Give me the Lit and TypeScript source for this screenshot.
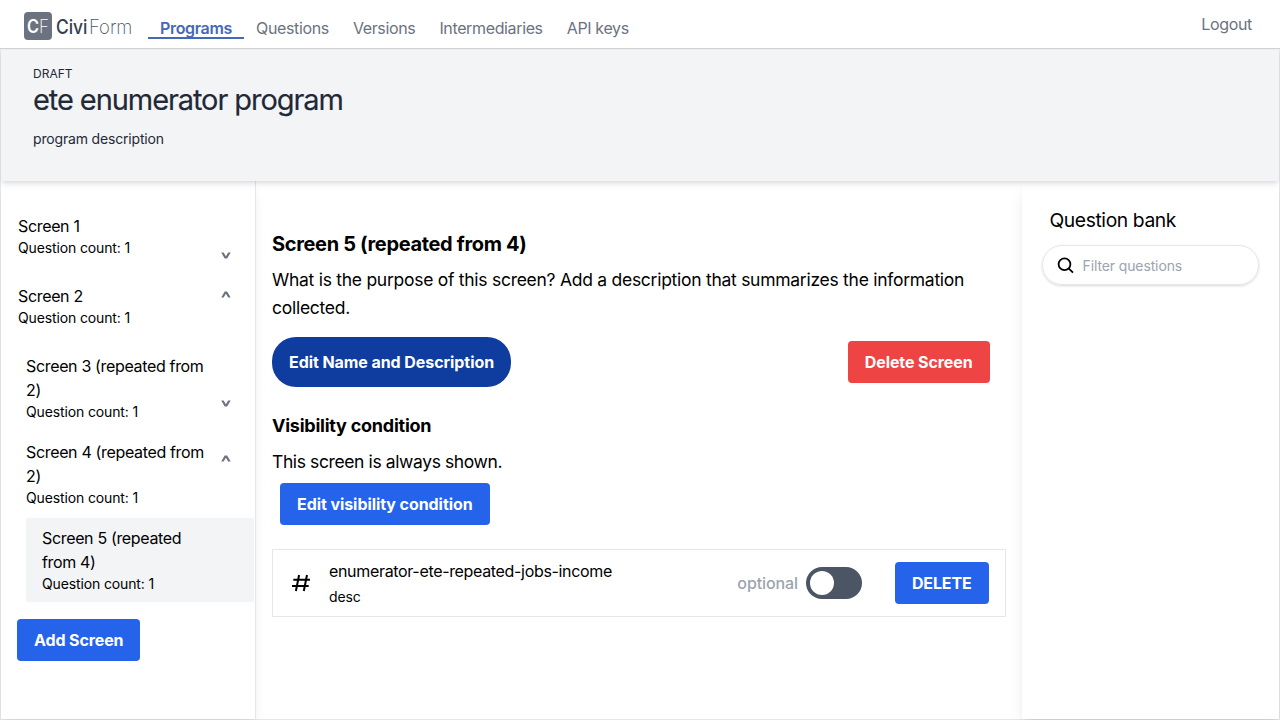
import { LitElement, html, css, nothing } from "lit";
import { customElement } from "lit/decorators.js";
import { classMap } from "lit/directives/class-map.js";

interface ScreenItem {
  name: string;
  level: number;
  arrow?: "up" | "down";
  selected?: boolean;
}

const SCREENS: ScreenItem[] = [
  { name: "Screen 1", level: 0, arrow: "down" },
  { name: "Screen 2", level: 0, arrow: "up" },
  { name: "Screen 3 (repeated from 2)", level: 1, arrow: "down" },
  { name: "Screen 4 (repeated from 2)", level: 1, arrow: "up" },
  { name: "Screen 5 (repeated from 4)", level: 2, selected: true },
];

const LINKS = ["Programs", "Questions", "Versions", "Intermediaries", "API keys"];

@customElement("app-root")
export class AppRoot extends LitElement {
  static styles = css`
    :host { display: block; width: 1280px; height: 720px; overflow: hidden; background: #fff; color: #000;
      font-family: Inter, "Liberation Sans", sans-serif; font-size: 16px; line-height: 24px; letter-spacing: -0.34px; }
    * { box-sizing: border-box; }
    .page { display: flex; flex-direction: column; height: 720px; }
    .top { height: 49px; flex: none; display: flex; align-items: flex-start; padding: 12px 28px 0 24px; color: #6b7280;
      border-bottom: 1px solid #cfd2d6; }
    .logo { display: block; flex: none; width: 110px; height: 28px; margin-right: 14px; letter-spacing: 0; }
    .nav { display: flex; padding-top: 4px; }
    .link { padding: 0 12px; height: 23px; white-space: nowrap; letter-spacing: -0.36px; }
    .active { color: #4568b7; font-weight: 600; border-bottom: 2px solid #4568b7; letter-spacing: -0.33px; }
    .logout { margin-left: auto; letter-spacing: -0.34px; }
    .frame { flex: 1; min-height: 0; display: flex; flex-direction: column; border: 1px solid #e5e7eb; border-top: 0; }
    .banner { position: relative; z-index: 1; height: 132px; flex: none; background: #f3f4f6; color: #1f2937; padding: 16px 32px;
      border-top: 1px solid #eceef0;
      box-shadow: 0 4px 6px -1px rgba(0,0,0,.1), 0 2px 4px -1px rgba(0,0,0,.06); }
    .draft { font-size: 12px; line-height: 16px; letter-spacing: 0; }
    .title { font-size: 29px; line-height: 36px; letter-spacing: -1.08px; -webkit-text-stroke: 0.15px #1f2937; }
    .desc { font-size: 14px; line-height: 20px; margin-top: 11px; letter-spacing: -0.17px; }
    .cols { flex: 1; min-height: 0; display: flex; }
    .side { width: 255px; flex: none; border-right: 1px solid #e5e7eb; padding-top: 25px;
      box-shadow: 0 10px 15px -3px rgba(0,0,0,.07), 0 4px 6px -2px rgba(0,0,0,.04); }
    .item { display: flex; margin: 0 1px 2px 1px; padding: 8px 0 8px 16px; }
    .level0 { margin-bottom: 10px; }
    .level1 { margin-left: 9px; }
    .level2 { margin-left: 25px; }
    .label { flex: none; width: 203px; }
    .level1 .label { width: 195px; padding-right: 10px; }
    .level2 .label { width: 155px; }
    .selected { background: #f3f4f6; }
    .count { font-size: 14px; line-height: 20px; letter-spacing: -0.13px; }
    .arrow { display: flex; align-items: flex-start; width: 10px; }
    .arrow svg { display: block; width: 10px; height: 7px; margin-bottom: -3px; }
    .up { padding-top: 7px; }
    .down { padding-top: 38px; }
    .level1 .up { padding-top: 15px; }
    .level1 .down { padding-top: 46px; }
    .btn { display: inline-block; height: 42px; padding: 9px 17px; border-radius: 4px; background: #2563eb; color: #fff;
      font-weight: 700; white-space: nowrap; letter-spacing: -0.07px; }
    .add { margin: 15px 0 0 16px; letter-spacing: -0.12px; }
    .main { width: 765.5px; flex: none; padding: 49px 16px 0; }
    .h2 { font-size: 20px; line-height: 28px; font-weight: 700; letter-spacing: -0.34px; }
    .p { font-size: 17.5px; line-height: 28px; letter-spacing: -0.27px; margin-top: 8px; }
    .short { letter-spacing: -0.39px; }
    .row { display: flex; justify-content: space-between; align-items: center; padding-right: 16px; margin: 15px 0 25px; }
    .pill { height: 50px; padding: 13px 17px; border-radius: 24px; background: #0f3d9f; letter-spacing: -0.07px; }
    .red { background: #ef4444; letter-spacing: -0.1px; }
    .h3 { font-size: 18px; line-height: 28px; font-weight: 700; letter-spacing: -0.24px; }
    .vis { display: block; width: max-content; margin: 7px 0 0 8px; letter-spacing: -0.07px; }
    .q { display: flex; align-items: center; height: 68px; border: 1px solid #e5e7eb; padding: 0 16px 0 18px; margin-top: 24px; }
    .hash { display: block; width: 20px; height: 20px; margin-right: 18px; }
    .qtext { flex: 1; }
    .qname { line-height: 24px; letter-spacing: -0.33px; }
    .qdesc { font-size: 14px; line-height: 20px; margin-top: 4px; letter-spacing: -0.1px; }
    .optional { color: #9ca3af; font-weight: 500; letter-spacing: -0.1px; }
    .toggle { width: 56px; height: 32px; border-radius: 16px; background: #4b5563; padding: 4px; margin: 0 33px 0 8px; }
    .knob { width: 24px; height: 24px; border-radius: 12px; background: #fff; }
    .del { letter-spacing: -0.15px; }
    .bank { flex: 1; box-shadow: 0 10px 15px -3px rgba(0,0,0,.1), 0 4px 6px -2px rgba(0,0,0,.05); padding: 25px 20px 0; }
    .bt { font-size: 19.3px; line-height: 28px; margin-left: 8px; letter-spacing: -0.4px; }
    .search { display: flex; align-items: center; height: 40px; margin-top: 11px; padding: 1px 0 0 14px; border: 1px solid #e5e7eb;
      border-radius: 20px; box-shadow: 0 1px 3px rgba(0,0,0,.1), 0 1px 2px rgba(0,0,0,.06); color: #9ca3af; font-size: 14px;
      letter-spacing: -0.12px; }
    .search svg { display: block; width: 18px; height: 18px; margin: 0 7.5px 0 0.5px; }
    .thin { font-weight: 200; }
  `;

  private logo() {
    return html`<svg class="logo" viewBox="0 0 110 28">
      <rect width="28" height="28" rx="4" fill="#6b7280"></rect>
      <text x="3" y="21" font-size="18" font-weight="600" fill="#fff" textLength="12" lengthAdjust="spacingAndGlyphs">C</text>
      <text class="thin" x="15" y="21" font-size="18" fill="#fff" textLength="10" lengthAdjust="spacingAndGlyphs">F</text>
      <text x="32" y="22" font-size="20" font-weight="500" fill="#323f52" textLength="31.5" lengthAdjust="spacingAndGlyphs">Civi</text>
      <text class="thin" x="65" y="22" font-size="20" fill="#4b5563" textLength="43.4" lengthAdjust="spacingAndGlyphs">Form</text>
    </svg>`;
  }

  private arrow(dir: "up" | "down") {
    const d = dir === "up"
      ? "M0.2 6.4 L3.7 0.6 H6.1 L9.7 6.4 H7.2 L4.9 2.7 L2.6 6.4 Z"
      : "M0.2 0.6 L3.7 6.4 H6.1 L9.7 0.6 H7.2 L4.9 4.3 L2.6 0.6 Z";
    return html`<div class="arrow ${dir}"><svg viewBox="0 0 10 7"><path d=${d} fill="#6b7280"></path></svg></div>`;
  }

  private screen(s: ScreenItem) {
    const classes = { item: true, [`level${s.level}`]: true, selected: !!s.selected };
    return html`<div class=${classMap(classes)}>
      <div class="label"><div>${s.name}</div><div class="count">Question count: 1</div></div>
      ${s.arrow ? this.arrow(s.arrow) : nothing}
    </div>`;
  }

  render() {
    return html`<div class="page">
      <div class="top">
        ${this.logo()}
        <div class="nav">${LINKS.map((t, i) => html`<div class=${classMap({ link: true, active: i === 0 })}>${t}</div>`)}</div>
        <div class="logout">Logout</div>
      </div>
      <div class="frame">
        <div class="banner">
          <div class="draft">DRAFT</div>
          <div class="title">ete enumerator program</div>
          <div class="desc">program description</div>
        </div>
        <div class="cols">
          <div class="side">
            ${SCREENS.map((s) => this.screen(s))}
            <div class="btn add">Add Screen</div>
          </div>
          <div class="main">
            <div class="h2">Screen 5 (repeated from 4)</div>
            <div class="p">What is the purpose of this screen? Add a description that summarizes the information collected.</div>
            <div class="row">
              <div class="btn pill">Edit Name and Description</div>
              <div class="btn red">Delete Screen</div>
            </div>
            <div class="h3">Visibility condition</div>
            <div class="p short">This screen is always shown.</div>
            <div class="btn vis">Edit visibility condition</div>
            <div class="q">
              <svg class="hash" viewBox="0 0 20 20" fill="none" stroke="#000" stroke-width="2">
                <path d="M8.1 2 L4.9 18 M16 2 L12.8 18 M2.3 6.8 H19 M1 13 H17.7"></path>
              </svg>
              <div class="qtext">
                <div class="qname">enumerator-ete-repeated-jobs-income</div>
                <div class="qdesc">desc</div>
              </div>
              <div class="optional">optional</div>
              <div class="toggle"><div class="knob"></div></div>
              <div class="btn del">DELETE</div>
            </div>
          </div>
          <div class="bank">
            <div class="bt">Question bank</div>
            <div class="search">
              <svg viewBox="0 0 18 18" fill="none" stroke="#000" stroke-width="1.8">
                <circle cx="7.5" cy="7.2" r="5.9"></circle><path d="M11.6 11.3 L16 15.7"></path>
              </svg>
              <span>Filter questions</span>
            </div>
          </div>
        </div>
      </div>
    </div>`;
  }
}
